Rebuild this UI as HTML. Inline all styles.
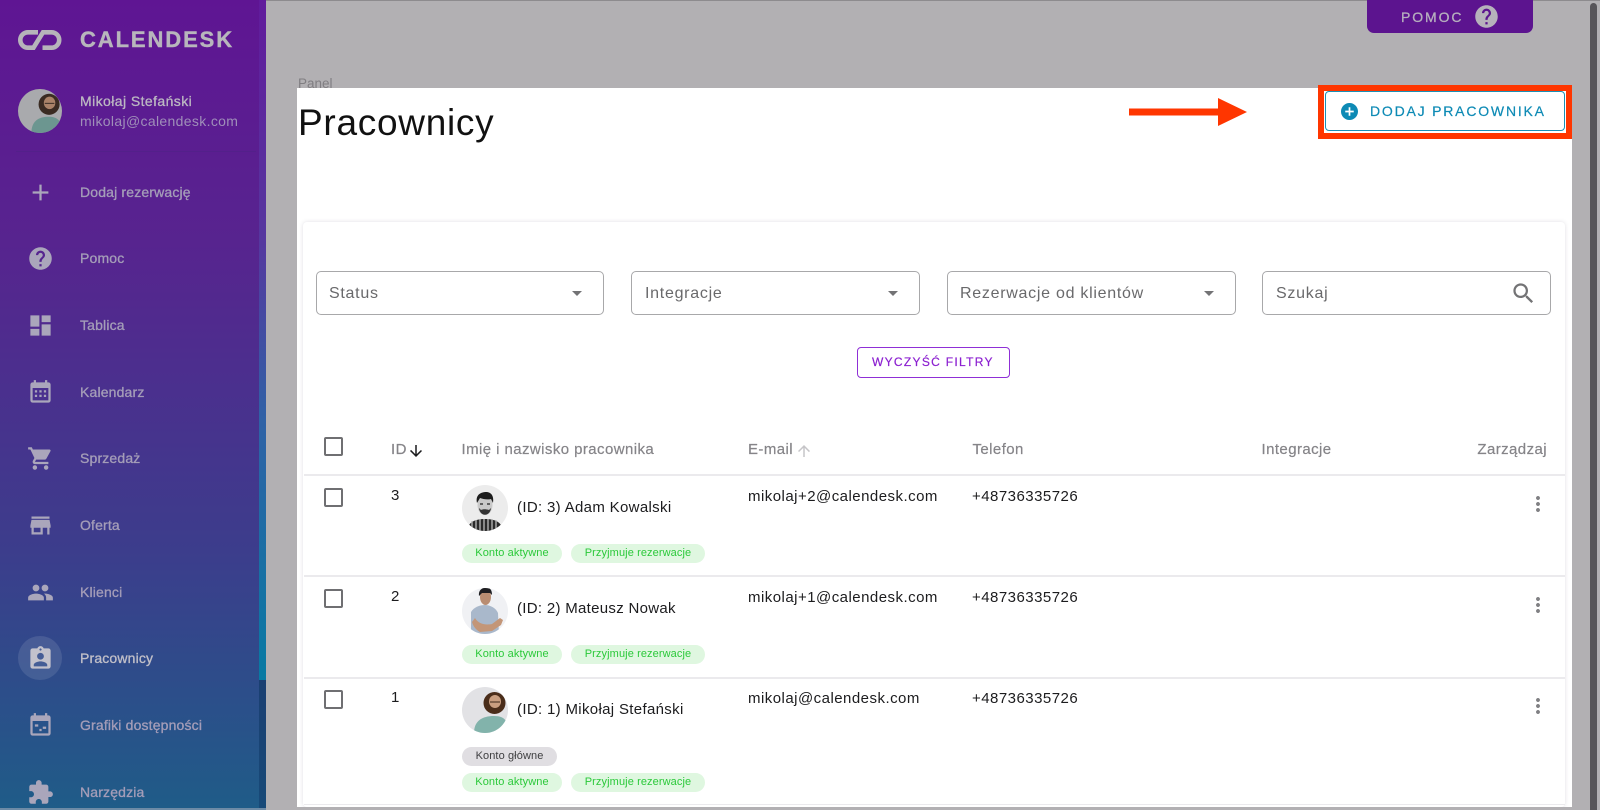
<!DOCTYPE html>
<html lang="pl"><head><meta charset="utf-8"><title>Pracownicy</title>
<style>
*{box-sizing:border-box}
html,body{margin:0;padding:0;width:1600px;height:810px;overflow:hidden;background:#b2b0b3;font-family:"Liberation Sans",sans-serif}
.a{position:absolute}
.t{position:absolute;white-space:nowrap;line-height:20px;height:20px}
#side{left:0;top:0;width:266px;height:810px;background:linear-gradient(180deg,#5f1593 0%,#57248f 30%,#3c3d8c 68%,#1f5c88 100%);overflow:hidden}
.m{color:#a49db8;font-size:14px;font-weight:400;left:80px;letter-spacing:.16px;-webkit-text-stroke:.32px currentColor}
.ic{position:absolute;left:26.500px;width:27px;height:27px;margin-top:-1.500px;fill:#aaa6bb}
.sel{position:absolute;top:271px;height:44px;border:1px solid #a8a8aa;border-radius:5px;background:#fff}
.f{font-size:16px;color:#69696b;top:284px;letter-spacing:.72px}
.arr{position:absolute;top:291px;width:0;height:0;border-left:5.500px solid transparent;border-right:5.500px solid transparent;border-top:5.500px solid #737375}
.h{font-size:15px;color:#858488;top:440px;letter-spacing:.42px;-webkit-text-stroke:.2px currentColor}
.d{font-size:15px;color:#1c1c1e;letter-spacing:.47px}
.n{font-size:15px;color:#1c1c1e;letter-spacing:.33px;left:517px}
.cb{position:absolute;left:324px;width:19px;height:19px;border:2px solid #6f6f72;border-radius:2px;background:#fff}
.line{position:absolute;left:304px;width:1261px;height:2px;background:#ebeaed}
.c{position:absolute;height:19px;line-height:18px;border-radius:10px;font-size:11px;text-align:center;letter-spacing:.1px}
.g{background:#dff7e0;color:#2bc93a}
.k{background:#e0dee2;color:#3e3e40}
.dots{position:absolute;left:1526px;width:24px;height:24px;fill:#808083}
svg{display:block}
</style></head><body>

<div class="a" style="left:0;top:0;width:1600px;height:1px;background:#8d8b8e"></div>

<div id="side" class="a">
<svg class="a" style="left:18px;top:30px" width="44" height="20" viewBox="0 0 44 20" fill="none" stroke="#b6b4ba" stroke-width="4.600">
<path d="M20 2.300H10a7.700 7.700 0 0 0 0 15.400h5.500L25 2.300H33.500a7.700 7.700 0 0 1 0 15.400H24.500"/></svg>
<div class="t" style="left:80px;top:30px;font-size:22px;font-weight:700;color:#b8b6bc;letter-spacing:1.900px;line-height:20px;-webkit-text-stroke:.4px currentColor">CALENDESK</div>

<svg class="a" style="left:18px;top:89px" width="44" height="44" viewBox="0 0 46 46"><defs><clipPath id="c0"><circle cx="23" cy="23" r="23"/></clipPath></defs><g clip-path="url(#c0)"><rect width="46" height="46" fill="#a9aaad"/><path d="M14 46c0-12 7-17 18-17s14 6 14 17z" fill="#6c9690"/><circle cx="32.500" cy="16" r="11" fill="#3a2b22"/><ellipse cx="33" cy="14.500" rx="6" ry="6.500" fill="#a98268"/><path d="M28 15h10" stroke="#2b211b" stroke-width=".9"/></g></svg>
<div class="t" style="left:80px;top:91px;font-size:14px;color:#bcb8c2;letter-spacing:.42px;-webkit-text-stroke:.3px currentColor">Mikołaj Stefański</div>
<div class="t" style="left:80px;top:111px;font-size:14px;color:#9f8fb9;letter-spacing:.34px">mikolaj@calendesk.com</div>
<div class="a" style="left:16px;top:151px;width:240px;height:1px;background:#53208a"></div>

<svg class="ic" style="top:180px" viewBox="0 0 24 24"><path d="M19 13h-6v6h-2v-6H5v-2h6V5h2v6h6v2z"/></svg>
<div class="t m" style="top:182px">Dodaj rezerwację</div>
<svg class="ic" style="top:246px" viewBox="0 0 24 24"><path d="M12 2C6.480 2 2 6.480 2 12s4.480 10 10 10 10-4.480 10-10S17.520 2 12 2zm1 17h-2v-2h2v2zm2.070-7.750l-.9.92C13.450 12.900 13 13.500 13 15h-2v-.5c0-1.100.45-2.100 1.170-2.830l1.240-1.260c.37-.36.59-.86.59-1.410 0-1.100-.9-2-2-2s-2 .9-2 2H8c0-2.210 1.790-4 4-4s4 1.790 4 4c0 .88-.36 1.680-.93 2.250z"/></svg>
<div class="t m" style="top:248px">Pomoc</div>
<svg class="ic" style="top:313px" viewBox="0 0 24 24"><path d="M3 13h8V3H3v10zm0 8h8v-6H3v6zm10 0h8V11h-8v10zm0-18v6h8V3h-8z"/></svg>
<div class="t m" style="top:315px">Tablica</div>
<svg class="ic" style="top:380px" viewBox="0 0 24 24"><path d="M19 3h-1V1h-2v2H8V1H6v2H5c-1.100 0-2 .9-2 2v14c0 1.100.9 2 2 2h14c1.100 0 2-.9 2-2V5c0-1.100-.9-2-2-2zm0 16H5V8h14v11z"/><path d="M7 10h2v2H7zM11 10h2v2h-2zM15 10h2v2h-2zM7 14h2v2H7zM11 14h2v2h-2zM15 14h2v2h-2z"/></svg>
<div class="t m" style="top:382px">Kalendarz</div>
<svg class="ic" style="top:446px" viewBox="0 0 24 24"><path d="M7 18c-1.100 0-1.990.9-1.990 2S5.900 22 7 22s2-.9 2-2-.9-2-2-2zM1 2v2h2l3.600 7.590-1.350 2.450c-.16.28-.25.61-.25.96 0 1.100.9 2 2 2h12v-2H7.420c-.14 0-.25-.11-.25-.25l.03-.12.9-1.630h7.450c.75 0 1.410-.41 1.750-1.030l3.580-6.490c.08-.14.12-.31.12-.48 0-.55-.45-1-1-1H5.210l-.94-2H1zm16 16c-1.100 0-1.990.9-1.990 2s.89 2 1.990 2 2-.9 2-2-.9-2-2-2z"/></svg>
<div class="t m" style="top:448px">Sprzedaż</div>
<svg class="ic" style="top:513px" viewBox="0 0 24 24"><path d="M20 4H4v2h16V4zm1 10v-2l-1-5H4l-1 5v2h1v6h10v-6h4v6h2v-6h1zm-9 4H6v-4h6v4z"/></svg>
<div class="t m" style="top:515px">Oferta</div>
<svg class="ic" style="top:580px" viewBox="0 0 24 24"><path d="M16 11c1.660 0 2.990-1.340 2.990-3S17.660 5 16 5c-1.660 0-3 1.340-3 3s1.340 3 3 3zm-8 0c1.660 0 2.990-1.340 2.990-3S9.660 5 8 5C6.340 5 5 6.340 5 8s1.340 3 3 3zm0 2c-2.330 0-7 1.170-7 3.500V19h14v-2.500c0-2.330-4.670-3.500-7-3.500zm8 0c-.29 0-.62.02-.97.05 1.160.84 1.970 1.970 1.970 3.450V19h6v-2.500c0-2.330-4.670-3.500-7-3.500z"/></svg>
<div class="t m" style="top:582px">Klienci</div>
<div class="a" style="left:18px;top:636px;width:44px;height:44px;border-radius:50%;background:rgba(255,255,255,.11)"></div>
<svg class="ic" style="top:646px;fill:#c3c2cc" viewBox="0 0 24 24"><path d="M19 3h-4.180C14.400 1.840 13.300 1 12 1c-1.300 0-2.400.84-2.820 2H5c-1.100 0-2 .9-2 2v14c0 1.100.9 2 2 2h14c1.100 0 2-.9 2-2V5c0-1.100-.9-2-2-2zm-7 0c.55 0 1 .45 1 1s-.45 1-1 1-1-.45-1-1 .45-1 1-1zm0 4c1.660 0 3 1.340 3 3s-1.340 3-3 3-3-1.340-3-3 1.340-3 3-3zm6 12H6v-1.400c0-2 4-3.100 6-3.100s6 1.100 6 3.100V19z"/></svg>
<div class="t m" style="top:648px;color:#c0bfc8">Pracownicy</div>
<svg class="ic" style="top:713px" viewBox="0 0 24 24"><path d="M19 3h-1V1h-2v2H8V1H6v2H5c-1.100 0-2 .9-2 2v14c0 1.100.9 2 2 2h14c1.100 0 2-.9 2-2V5c0-1.100-.9-2-2-2zm0 16H5V8h14v11z"/><path d="M7 11h3v2H7zM14 13h3v2h-3zM11 15h2v2h-2z"/></svg>
<div class="t m" style="top:715px">Grafiki dostępności</div>
<svg class="ic" style="top:780px" viewBox="0 0 24 24"><path d="M20.500 11H19V7c0-1.100-.9-2-2-2h-4V3.500C13 2.120 11.880 1 10.500 1S8 2.120 8 3.500V5H4c-1.100 0-1.990.9-1.990 2v3.800H3.500c1.490 0 2.700 1.210 2.700 2.700s-1.210 2.700-2.700 2.700H2V20c0 1.100.9 2 2 2h3.800v-1.500c0-1.490 1.210-2.700 2.700-2.700 1.490 0 2.700 1.210 2.700 2.700V22H17c1.100 0 2-.9 2-2v-4h1.500c1.380 0 2.500-1.120 2.500-2.500S21.880 11 20.500 11z"/></svg>
<div class="t m" style="top:782px">Narzędzia</div>

<div class="a" style="left:259px;top:0;width:7px;height:680px;background:linear-gradient(180deg,#611b9c 0%,#56379f 35%,#2f62a6 62%,#077aa3 100%)"></div>
<div class="a" style="left:259px;top:680px;width:7px;height:130px;background:linear-gradient(180deg,#1a3f72,#184a78)"></div>
<div class="a" style="left:0;top:808px;width:266px;height:2px;background:#6d8ba6"></div>
</div>

<div class="a" style="left:1367px;top:0;width:166px;height:33px;background:#5c148f;border-radius:0 0 7px 7px"></div>
<div class="t" style="left:1401px;top:7px;font-size:14px;color:#b6afbe;letter-spacing:1.900px;-webkit-text-stroke:.3px currentColor">POMOC</div>
<svg class="a" style="left:1472.500px;top:3px;fill:#b6b2bb" width="27" height="27" viewBox="0 0 24 24"><path d="M12 2C6.480 2 2 6.480 2 12s4.480 10 10 10 10-4.480 10-10S17.520 2 12 2zm1 17h-2v-2h2v2zm2.070-7.750l-.9.92C13.450 12.900 13 13.500 13 15h-2v-.5c0-1.100.45-2.100 1.170-2.830l1.240-1.260c.37-.36.59-.86.59-1.410 0-1.100-.9-2-2-2s-2 .9-2 2H8c0-2.210 1.790-4 4-4s4 1.790 4 4c0 .88-.36 1.680-.93 2.250z"/></svg>
<div class="a" style="left:1590px;top:3px;width:7px;height:807px;background:#575559;border-radius:4px 4px 0 0"></div>

<div class="t" style="left:298px;top:74px;font-size:13.500px;color:#807e82">Panel</div>

<div class="a" style="left:297px;top:88px;width:1275px;height:722px;background:#fff"></div>
<div class="t" style="left:298px;top:101px;height:44px;line-height:44px;font-size:37px;color:#111;letter-spacing:.72px">Pracownicy</div>

<div class="a" style="left:303px;top:222px;width:1262px;height:585px;background:#fff;border-radius:4px;box-shadow:0 0 4px rgba(60,50,90,.16)"></div>

<div class="sel" style="left:316px;width:288px"></div>
<div class="t f" style="left:329px">Status</div>
<div class="arr" style="left:571.500px"></div>
<div class="sel" style="left:631px;width:289px"></div>
<div class="t f" style="left:645px">Integracje</div>
<div class="arr" style="left:887.500px"></div>
<div class="sel" style="left:947px;width:289px"></div>
<div class="t f" style="left:960px">Rezerwacje od klientów</div>
<div class="arr" style="left:1203.500px"></div>
<div class="sel" style="left:1262px;width:289px"></div>
<div class="t f" style="left:1276px">Szukaj</div>
<svg class="a" style="left:1510px;top:280px;fill:#737375" width="27" height="27" viewBox="0 0 24 24"><path d="M15.500 14h-.79l-.28-.27C15.410 12.590 16 11.110 16 9.500 16 5.910 13.090 3 9.500 3S3 5.910 3 9.500 5.910 16 9.500 16c1.610 0 3.090-.59 4.230-1.570l.27.28v.79l5 4.990L20.490 19l-4.990-5zm-6 0C7.010 14 5 11.990 5 9.500S7.010 5 9.500 5 14 7.010 14 9.500 11.990 14 9.500 14z"/></svg>

<div class="a" style="left:857px;top:347px;width:153px;height:31px;border:1px solid #8f2fd6;border-radius:4px;background:#fff"></div>
<div class="t" style="left:872px;top:352px;font-size:12px;color:#8b1fd0;letter-spacing:1.300px;-webkit-text-stroke:.2px currentColor">WYCZYŚĆ FILTRY</div>

<div class="cb" style="top:437px"></div>
<div class="t h" style="left:391px">ID</div>
<svg class="a" style="left:407px;top:442px;fill:#1c1c1e" width="18" height="18" viewBox="0 0 24 24"><path d="M20 12l-1.410-1.410L13 16.170V4h-2v12.170l-5.580-5.590L4 12l8 8 8-8z"/></svg>
<div class="t h" style="left:461.500px">Imię i nazwisko pracownika</div>
<div class="t h" style="left:748px">E-mail</div>
<svg class="a" style="left:795px;top:442px;fill:#c6c5c8" width="18" height="18" viewBox="0 0 24 24"><path d="M4 12l1.410 1.410L11 7.830V20h2V7.830l5.580 5.590L20 12l-8-8-8 8z"/></svg>
<div class="t h" style="left:972.500px">Telefon</div>
<div class="t h" style="left:1261.500px">Integracje</div>
<div class="t h" style="right:53px">Zarządzaj</div>
<div class="line" style="top:474px"></div>

<div class="cb" style="top:488px"></div>
<div class="t d" style="left:391px;top:486px">3</div>
<svg class="a" style="left:462px;top:485px" width="46" height="46" viewBox="0 0 46 46"><defs><clipPath id="c1"><circle cx="23" cy="23" r="23"/></clipPath></defs><g clip-path="url(#c1)"><rect width="46" height="46" fill="#ececec"/><path d="M5 46c1-9 8-12 18-12s17 3 18 12z" fill="#2a2a2a"/><path d="M10 36v10M14 35v11M18 34v12M22 34v12M26 34v12M30 34v12M34 35v11" stroke="#bbb" stroke-width="1.300"/><ellipse cx="23" cy="20" rx="7.500" ry="10" fill="#c9c9c9"/><path d="M15 18c-2-9 5-11 9-11 6 0 8 5 7 11l-2-4c-4 1-8 0-11-1z" fill="#1d1d1d"/><path d="M17 23c1 9 11 9 12 0l-2 2c-3-1-6-1-8 0z" fill="#333"/><path d="M18 19h3M25 19h3" stroke="#222" stroke-width="1.300"/></g></svg>
<div class="t n" style="top:498px">(ID: 3) Adam Kowalski</div>
<div class="c g" style="left:462px;top:544px;width:100px">Konto aktywne</div>
<div class="c g" style="left:571px;top:544px;width:134px">Przyjmuje rezerwacje</div>
<div class="t d" style="left:748px;top:487px">mikolaj+2@calendesk.com</div>
<div class="t d" style="left:972px;top:487px">+48736335726</div>
<svg class="dots" style="top:492px" viewBox="0 0 24 24"><path d="M12 8c1.100 0 2-.9 2-2s-.9-2-2-2-2 .9-2 2 .9 2 2 2zm0 2c-1.100 0-2 .9-2 2s.9 2 2 2 2-.9 2-2-.9-2-2-2zm0 6c-1.100 0-2 .9-2 2s.9 2 2 2 2-.9 2-2-.9-2-2-2z"/></svg>
<div class="line" style="top:575px"></div>

<div class="cb" style="top:589px"></div>
<div class="t d" style="left:391px;top:587px">2</div>
<svg class="a" style="left:462px;top:588px" width="46" height="46" viewBox="0 0 46 46"><defs><clipPath id="c2"><circle cx="23" cy="23" r="23"/></clipPath></defs><g clip-path="url(#c2)"><rect width="46" height="46" fill="#f0f1f4"/><path d="M9 46l0-22c3-5 9-7 14-7s11 3 13 8l1 21z" fill="#a9b8cb"/><path d="M13 30c4 7 12 7 17 6l8-6 3 2-2 5-9 6-12 1c-4-2-7-6-8-10z" fill="#c39678"/><ellipse cx="23.500" cy="9" rx="5.500" ry="8" fill="#b98d72"/><path d="M17 8c-1-7 5-9 8-8 4 0 5 3 5 7l-2-2h-8z" fill="#1e1e22"/></g></svg>
<div class="t n" style="top:599px;letter-spacing:.3px">(ID: 2) Mateusz Nowak</div>
<div class="c g" style="left:462px;top:645px;width:100px">Konto aktywne</div>
<div class="c g" style="left:571px;top:645px;width:134px">Przyjmuje rezerwacje</div>
<div class="t d" style="left:748px;top:588px">mikolaj+1@calendesk.com</div>
<div class="t d" style="left:972px;top:588px">+48736335726</div>
<svg class="dots" style="top:593px" viewBox="0 0 24 24"><path d="M12 8c1.100 0 2-.9 2-2s-.9-2-2-2-2 .9-2 2 .9 2 2 2zm0 2c-1.100 0-2 .9-2 2s.9 2 2 2 2-.9 2-2-.9-2-2-2zm0 6c-1.100 0-2 .9-2 2s.9 2 2 2 2-.9 2-2-.9-2-2-2z"/></svg>
<div class="line" style="top:677px"></div>

<div class="cb" style="top:690px"></div>
<div class="t d" style="left:391px;top:688px">1</div>
<svg class="a" style="left:462px;top:687px" width="46" height="46" viewBox="0 0 46 46"><defs><clipPath id="c3"><circle cx="23" cy="23" r="23"/></clipPath></defs><g clip-path="url(#c3)"><rect width="46" height="46" fill="#e2e2e5"/><path d="M12 46c0-12 8-17 20-17s14 6 14 17z" fill="#82b3ab"/><circle cx="32.500" cy="16" r="11" fill="#4a2d1a"/><ellipse cx="33" cy="14.500" rx="6" ry="6.500" fill="#c99e80"/><path d="M28 15h10" stroke="#3a2618" stroke-width=".9"/></g></svg>
<div class="t n" style="top:700px">(ID: 1) Mikołaj Stefański</div>
<div class="c k" style="left:462px;top:747px;width:95px">Konto główne</div>
<div class="c g" style="left:462px;top:773px;width:100px">Konto aktywne</div>
<div class="c g" style="left:571px;top:773px;width:134px">Przyjmuje rezerwacje</div>
<div class="t d" style="left:748px;top:689px">mikolaj@calendesk.com</div>
<div class="t d" style="left:972px;top:689px">+48736335726</div>
<svg class="dots" style="top:694px" viewBox="0 0 24 24"><path d="M12 8c1.100 0 2-.9 2-2s-.9-2-2-2-2 .9-2 2 .9 2 2 2zm0 2c-1.100 0-2 .9-2 2s.9 2 2 2 2-.9 2-2-.9-2-2-2zm0 6c-1.100 0-2 .9-2 2s.9 2 2 2 2-.9 2-2-.9-2-2-2z"/></svg>
<div class="line" style="top:804px;height:1px"></div>
<div class="a" style="left:297px;top:807px;width:1275px;height:3px;background:#b2b0b3"></div>

<div class="a" style="left:1318px;top:85px;width:254px;height:54px;border:6px solid #ff3600;background:#fff"></div>
<div class="a" style="left:1325px;top:91px;width:240px;height:40px;border:1px solid #1a8fb5;border-radius:4px;background:#fff"></div>
<svg class="a" style="left:1341px;top:103px;fill:#0d8ab5" width="17" height="17" viewBox="2 2 20 20"><path d="M12 2C6.480 2 2 6.480 2 12s4.480 10 10 10 10-4.480 10-10S17.520 2 12 2zm5 11h-4v4h-2v-4H7v-2h4V7h2v4h4v2z"/></svg>
<div class="t" style="left:1370px;top:101px;font-size:14px;color:#0d8ab5;letter-spacing:1.800px;-webkit-text-stroke:.2px currentColor">DODAJ PRACOWNIKA</div>
<svg class="a" style="left:1129px;top:98px" width="118" height="28" viewBox="0 0 118 28"><path d="M0 10.500h89V0l29 14-29 14V17.500H0z" fill="#ff3600"/></svg>

</body></html>
